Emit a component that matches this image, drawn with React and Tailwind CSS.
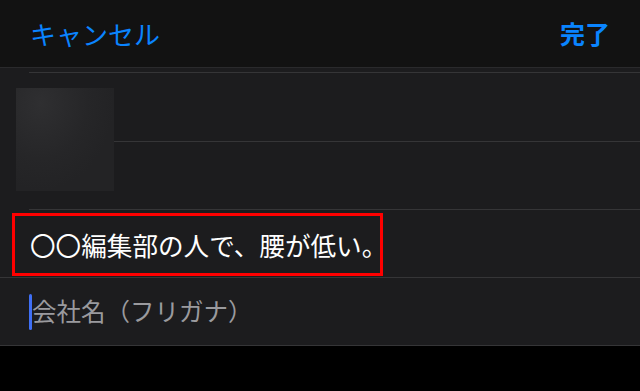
import React from 'react';

const Row = ({ className = '', children }) => (
  <div className={`border-b border-[#353537] ${className}`}>{children}</div>
);

const App = () => {
  return (
    <div className="w-[640px] h-[391px] bg-black font-['Noto_Sans_CJK_JP','Noto_Sans',sans-serif] overflow-hidden">
      {/* Nav bar */}
      <header className="h-[68px] bg-[#121212] border-b border-[#2a2a2c] flex items-center justify-between pl-[30px] pr-[30px]">
        <button className="text-[26px] leading-none text-[#0a84ff]">キャンセル</button>
        <button className="text-[25px] leading-none font-bold text-[#0a84ff]">完了</button>
      </header>

      {/* Form */}
      <main className="bg-[#1c1c1e]">
        <Row className="h-[5px] ml-[29px]" />

        <div className="flex h-[69px]">
          <div className="w-[114px] shrink-0 pl-[16px] pt-[15px]">
            <div className="w-[98px] h-[103px] bg-[radial-gradient(ellipse_at_25%_15%,#2f2f31,#262628_45%,#232325_70%)]" />
          </div>
          <Row className="flex-1" />
        </div>

        <Row className="h-[68px] ml-[29px]" />

        <Row className="h-[68px] pt-[3px] pl-[12px]">
          <div className="w-[371px] h-[63px] border-[3px] border-[#ff0000] flex items-center pl-[15px]">
            <span className="text-[25.6px] leading-none text-white whitespace-nowrap">〇〇編集部の人で、腰が低い。</span>
          </div>
        </Row>

        <Row className="h-[68px] flex items-center pl-[29px]">
          <div className="w-[3px] h-[36px] rounded-full bg-[#3f6ff5]" />
          <span className="text-[24.5px] leading-none text-[#9a9a9e] whitespace-nowrap">会社名（フリガナ）</span>
        </Row>
      </main>
    </div>
  );
};

export default App;
